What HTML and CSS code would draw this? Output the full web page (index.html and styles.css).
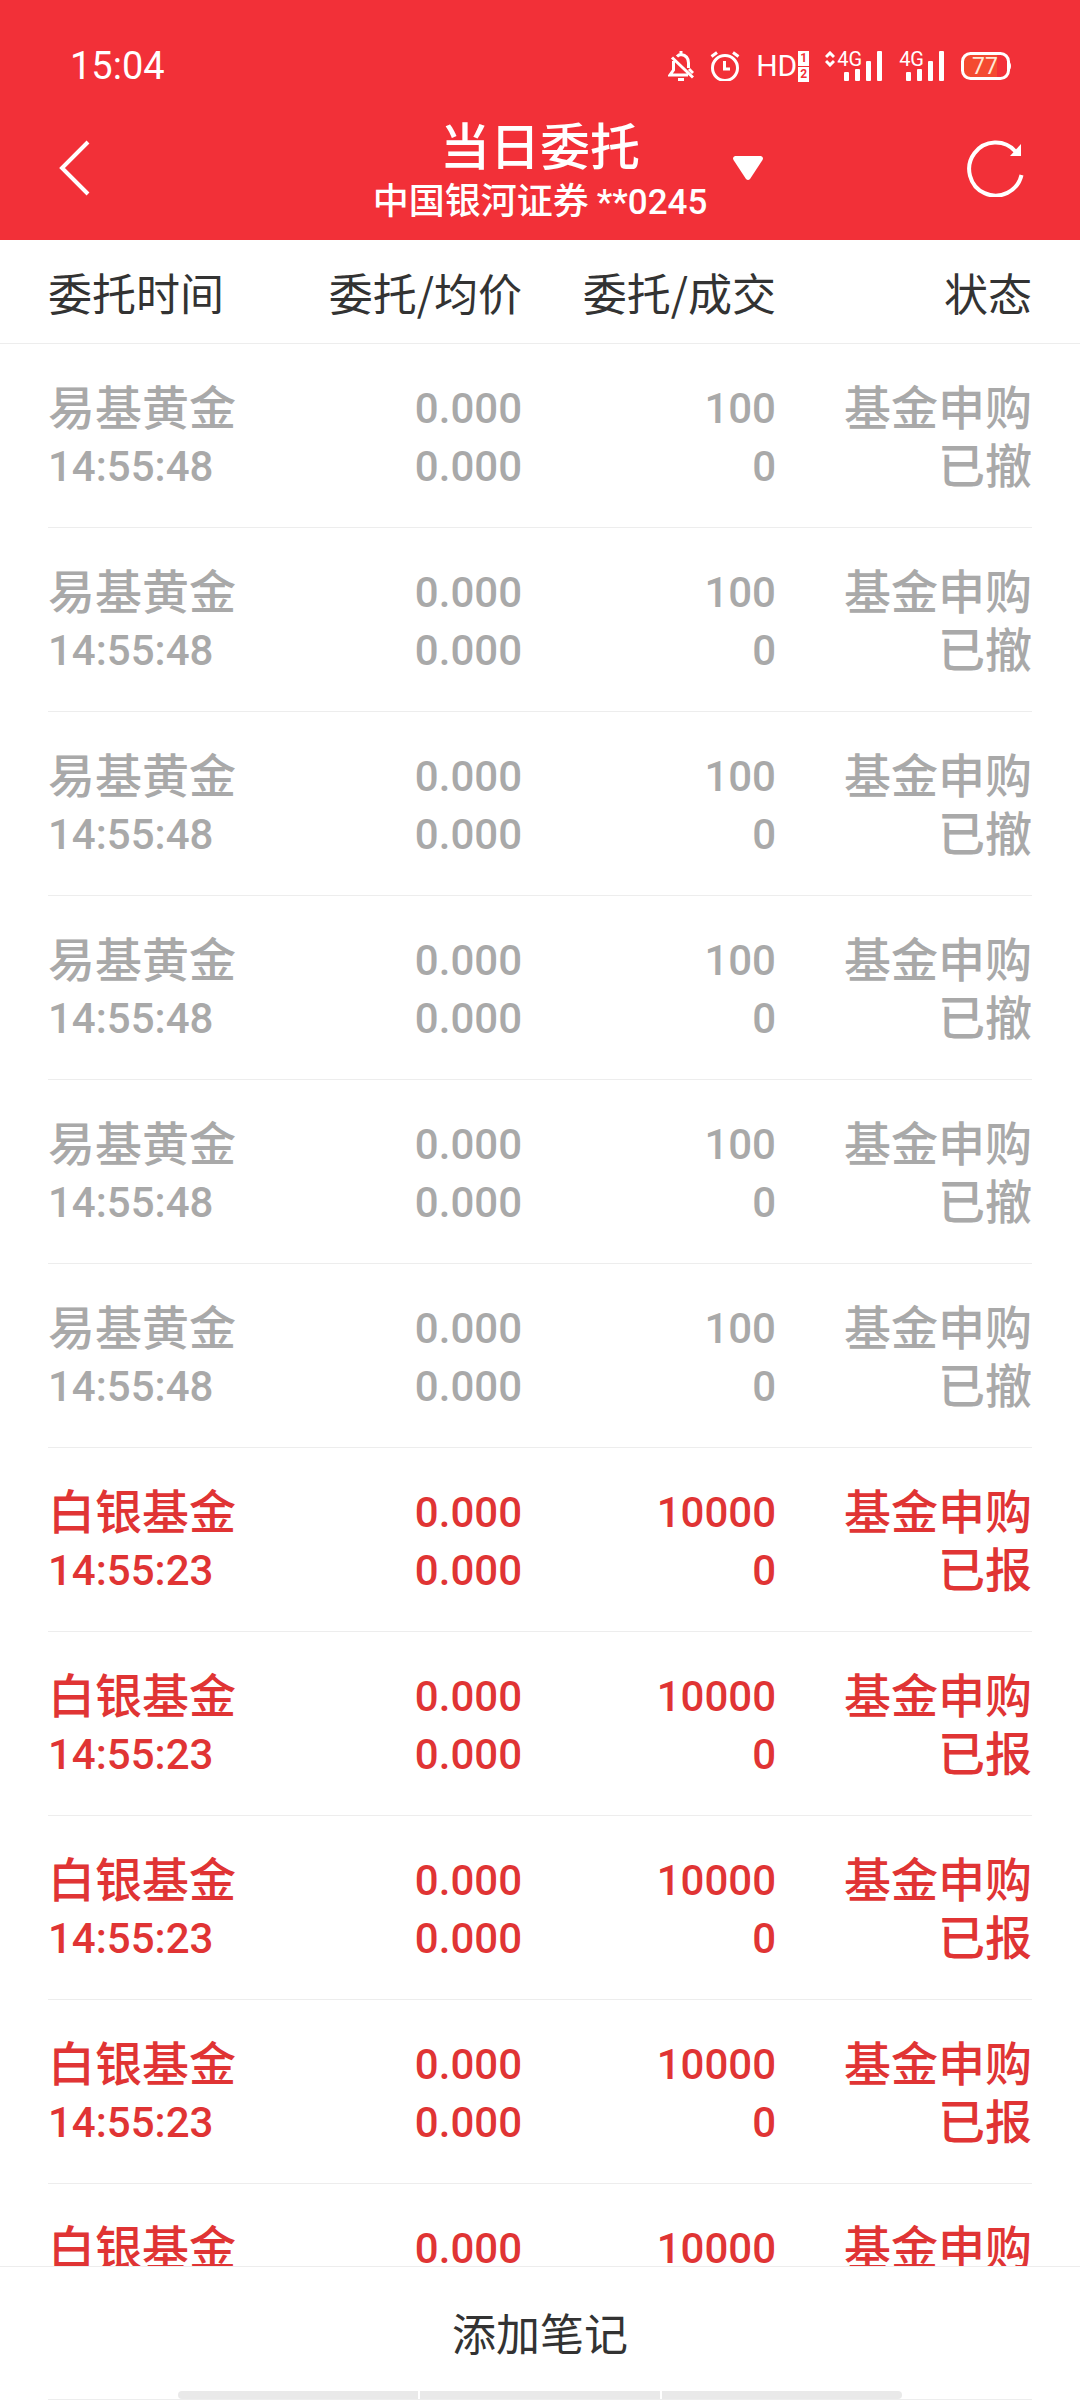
FILE: index.html
```html
<!DOCTYPE html>
<html lang="zh-CN">
<head>
  <meta charset="UTF-8" />
  <meta name="viewport" content="width=device-width, initial-scale=1" />
  <title>当日委托</title>
  <link rel="stylesheet" href="styles.css">
</head>
<body>

  <header class="header">
    <div class="status-bar">
      <span class="clock">15:04</span>
      <div class="status-icons">
        <!-- muted bell -->
        <svg width="26" height="30" viewBox="0 0 26 30" fill="none" stroke="#fff" stroke-width="3">
          <path d="M9 5.500Q11 3.500 13 3.500Q20.500 4.500 20.500 12V17M13 0v4M5.500 10V19L2 24H20M4 6.500L25 26.500" />
          <path d="M10 28.500h6" />
          <path d="M21 18l4 4" />
        </svg>
        <!-- alarm clock -->
        <svg width="30" height="30" viewBox="0 0 30 30" fill="none" stroke="#fff" stroke-width="3">
          <circle cx="15" cy="17" r="12.500" />
          <path d="M1.500 5.500L7 1.500M28.500 5.500L23 1.500M14.500 10v8H20" />
        </svg>
        <!-- HD 1/2 -->
        <div class="hd">
          <span>HD</span>
          <div class="sims"><b>1</b><b>2</b></div>
        </div>
        <div class="signal">
          <svg class="data-arrows" width="10" height="16" viewBox="0 0 10 16" fill="none" stroke="#fff" stroke-width="3">
            <path d="M1 6L5 2L9 6M1 10L5 14L9 10" />
          </svg>
          <span class="net">4G</span>
          <svg class="bars" width="39" height="30" viewBox="0 0 39 30" fill="#fff">
            <rect x="0" y="21" width="5" height="9" rx="1" />
            <rect x="11" y="18" width="5" height="12" rx="1" />
            <rect x="22" y="10" width="5" height="20" rx="1" />
            <rect x="33" y="0" width="5" height="30" rx="1" />
          </svg>
        </div>
        <div class="signal">
          <span class="net">4G</span>
          <svg class="bars" width="39" height="30" viewBox="0 0 39 30" fill="#fff">
            <rect x="0" y="21" width="5" height="9" rx="1" />
            <rect x="11" y="18" width="5" height="12" rx="1" />
            <rect x="22" y="10" width="5" height="20" rx="1" />
            <rect x="33" y="0" width="5" height="30" rx="1" />
          </svg>
        </div>
        <!-- battery -->
        <svg width="50" height="30" viewBox="0 0 50 30">
          <path d="M7 4H36V26H7Q3 26 3 22V8Q3 4 7 4Z" fill="#f44a30" />
          <rect x="1.500" y="2.500" width="46" height="25" rx="8" fill="none" stroke="#fff" stroke-width="3" />
          <path d="M47 10q3 1 3 5t-3 5z" fill="#fff" />
          <text class="battery" x="24" y="23" text-anchor="middle">77</text>
        </svg>
      </div>
    </div>

    <div class="nav">
      <button class="icon-btn" type="button" aria-label="返回">
        <svg width="36" height="56" viewBox="0 0 36 56" fill="none" stroke="#fff" stroke-width="4">
          <path d="M33 2L7 28L33 54" />
        </svg>
      </button>
      <div class="titles">
        <h1>当日委托</h1>
        <p>中国银河证券 <span class="account">**0245</span></p>
      </div>
      <div class="nav-right">
        <button class="icon-btn" type="button" aria-label="切换账户">
          <svg width="30" height="24" viewBox="0 0 30 24">
            <path d="M2 0H28Q31 1 29.500 4L17 23Q15 25 13 23L0.500 4Q-1 1 2 0Z" fill="#fff" />
          </svg>
        </button>
        <button class="icon-btn" type="button" aria-label="刷新">
          <svg width="58" height="58" viewBox="0 0 58 58">
            <path d="M48.500 12.500A26.500 26.500 0 1 0 54.500 36" fill="none" stroke="#fff" stroke-width="4" />
            <path d="M54 5V17H43Z" fill="#fff" />
          </svg>
        </button>
      </div>
    </div>
  </header>

  <main class="orders">
    <table>
      <thead>
        <tr>
          <th class="col-name" scope="col">委托时间</th>
          <th class="col-price" scope="col">委托/均价</th>
          <th class="col-amount" scope="col">委托/成交</th>
          <th class="col-state" scope="col">状态</th>
        </tr>
      </thead>
      <tbody id="orderList">
        <!-- Orders will be injected here -->
      </tbody>
    </table>
  </main>

  <footer class="footer">
    <button class="note-btn" type="button">添加笔记</button>
    <div class="gesture-bar"><span></span><span></span><span></span></div>
  </footer>

  <script>
    const cancelled = { name: '易基黄金', time: '14:55:48', amount: 100, state: '已撤', cls: 'cancelled' };
    const reported = { name: '白银基金', time: '14:55:23', amount: 10000, state: '已报', cls: 'reported' };
    const orders = [...Array(6).fill(cancelled), ...Array(5).fill(reported)];

    const list = document.getElementById('orderList');
    orders.forEach(order => {
      const row = document.createElement('tr');
      row.className = order.cls;
      row.innerHTML = `
        <td><div class="name">${order.name}</div><div class="num">${order.time}</div></td>
        <td><div class="num">0.000</div><div class="num">0.000</div></td>
        <td><div class="num">${order.amount}</div><div class="num">0</div></td>
        <td class="state"><div>基金申购</div><div>${order.state}</div></td>
      `;
      list.appendChild(row);
    });
  </script>

</body>
</html>
```

FILE: styles.css
```css
:root {
  --primary: #f23038;
  --text: #333;
  --muted: #a9a9a9;
  --red: #e03434;
  --line: #ededed;
  --side: 48px;
}
* {
  box-sizing: border-box;
}
body {
  margin: 0;
  height: 100vh;
  display: flex;
  flex-direction: column;
  font-family: "Noto Sans CJK SC", sans-serif;
  background: #fff;
  color: var(--text);
}
button {
  border: 0;
  padding: 0;
  background: none;
  color: inherit;
  font-family: inherit;
}
svg {
  display: block;
}

/* header */
.header {
  background: var(--primary);
  color: #fff;
}
.status-bar {
  display: flex;
  justify-content: space-between;
  align-items: center;
  padding: 36px 69px 0 70px;
  font-family: Roboto, sans-serif;
  line-height: 60px;
}
.clock {
  font-size: 38px;
}
.status-icons {
  display: flex;
  align-items: center;
  gap: 16px;
}
.hd {
  display: flex;
  align-items: center;
  gap: 1px;
  height: 30px;
  font-size: 30px;
  line-height: 30px;
}
.sims {
  display: grid;
  gap: 1px;
}
.sims b {
  width: 11px;
  background: #fff;
  color: var(--primary);
  font-size: 12px;
  line-height: 15px;
  text-align: center;
}
.signal {
  display: flex;
  align-items: flex-start;
  gap: 2px;
  height: 30px;
}
.net {
  font-size: 20px;
  line-height: 16px;
}
/* bars tuck in under the 4G label */
.bars {
  margin-left: -20px;
}
.battery {
  font-size: 23px;
  fill: #ffe9d6;
}
.nav {
  display: grid;
  grid-template-columns: 1fr auto 1fr;
  align-items: center;
  min-height: 144px;
  padding: 0 55px;
}
.icon-btn {
  justify-self: start;
}
.titles {
  padding-top: 6px;
  text-align: center;
}
.titles h1 {
  margin: 0;
  font-size: 50px;
  font-weight: 500;
  line-height: 58px;
}
.titles p {
  margin: 0;
  font-size: 36px;
  font-weight: 500;
  line-height: 52px;
}
.account {
  font-family: Roboto, sans-serif;
  font-size: 35px;
}
.nav-right {
  display: flex;
  justify-content: space-between;
  align-items: center;
  padding-left: 26px;
}

/* order table */
.orders {
  flex: 1;
  min-height: 0;
  overflow-y: auto;
  scrollbar-width: none;
}
table {
  width: 100%;
  table-layout: fixed;
  border-collapse: separate;
  border-spacing: 0;
}
th,
td {
  padding: 0;
  text-align: right;
  vertical-align: top;
}
th:first-child,
td:first-child {
  padding-left: var(--side);
  text-align: left;
}
th:last-child,
td:last-child {
  padding-right: var(--side);
}
th {
  padding-top: 22px;
  padding-bottom: 21px;
  border-bottom: 1px solid var(--line);
  font-size: 44px;
  font-weight: 400;
  line-height: 60px;
}
.col-price,
.col-amount {
  width: 254px;
}
.col-state {
  width: 304px;
}
td {
  padding-top: 36px;
  padding-bottom: 32px;
  font-size: 47px;
  font-weight: 500;
  line-height: 58px;
}
td:first-child,
.state {
  padding-top: 32px;
}
/* divider is inset on both sides, unlike the one under the head */
tbody tr {
  background: linear-gradient(var(--line), var(--line)) center bottom / calc(100% - 96px) 1px no-repeat;
}
.num {
  font-family: Roboto, sans-serif;
  font-size: 42px;
}
.name {
  padding-bottom: 4px;
}
.cancelled {
  color: var(--muted);
}
.reported {
  color: var(--red);
}

/* footer */
.footer {
  border-top: 1px solid var(--line);
  background: #fff;
}
.note-btn {
  display: block;
  width: 100%;
  padding-top: 6px;
  font-size: 44px;
  line-height: 118px;
}
.gesture-bar {
  display: flex;
  gap: 2px;
  margin: 0 var(--side);
  padding: 0 130px;
  border-bottom: 1px solid var(--line);
}
.gesture-bar span {
  flex: 1;
  height: 8px;
  background: #e9e9e9;
}
.gesture-bar span:first-child {
  border-radius: 4px 0 0 4px;
}
.gesture-bar span:last-child {
  border-radius: 0 4px 4px 0;
}
```
